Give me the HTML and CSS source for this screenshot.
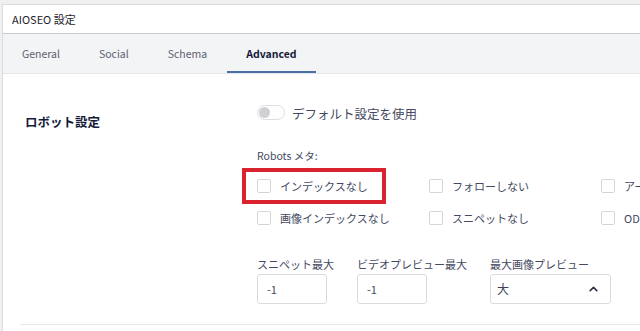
FILE: index.html
```html
<!DOCTYPE html>
<html lang="ja">
<head>
<meta charset="utf-8">
<title>AIOSEO 設定</title>
<link rel="stylesheet" href="styles.css">
</head>
<body>
<div class="panel">
  <div class="panel-header">AIOSEO 設定</div>
  <div class="tabs">
    <div class="tab">General</div>
    <div class="tab">Social</div>
    <div class="tab">Schema</div>
    <div class="tab active">Advanced</div>
  </div>
  <div class="content">
    <div class="setting-row">
      <div class="setting-label">ロボット設定</div>
      <div class="setting-body">
        <div class="toggle-row">
          <span class="toggle"><span class="knob"></span></span>
          <span class="toggle-text">デフォルト設定を使用</span>
        </div>
        <div class="meta-label">Robots メタ:</div>
        <div class="check-grid">
          <label class="check highlighted"><span class="box"></span><span class="check-text">インデックスなし</span><span class="highlight"></span></label>
          <label class="check"><span class="box"></span><span class="check-text">フォローしない</span></label>
          <label class="check"><span class="box"></span><span class="check-text">アーカイブなし</span></label>
          <label class="check"><span class="box"></span><span class="check-text">画像インデックスなし</span></label>
          <label class="check"><span class="box"></span><span class="check-text">スニペットなし</span></label>
          <label class="check"><span class="box"></span><span class="check-text">ODPなし</span></label>
        </div>
        <div class="fields">
          <div class="field">
            <div class="field-label">スニペット最大</div>
            <div class="input">-1</div>
          </div>
          <div class="field">
            <div class="field-label">ビデオプレビュー最大</div>
            <div class="input">-1</div>
          </div>
          <div class="field">
            <div class="field-label">最大画像プレビュー</div>
            <div class="select">
              <span class="select-value">大</span>
              <svg class="chev" width="9" height="6" viewBox="0 0 9 6"><polyline points="1.2,4.6 4.5,1.4 7.8,4.6" fill="none" stroke="#2c3345" stroke-width="1.6" stroke-linecap="round" stroke-linejoin="round"/></svg>
            </div>
          </div>
        </div>
      </div>
    </div>
  </div>
</div>
</body>
</html>
```
FILE: styles.css
```css
html, body {
  margin: 0;
  padding: 0;
  overflow: hidden;
}
body {
  background: #f0f0f1;
  font-family: "Noto Sans CJK JP", "Noto Sans", sans-serif;
  color: #434960;
  width: 640px;
  height: 331px;
}
.panel {
  margin: 4px 0 0 2px;
  width: 800px;
  height: 400px;
  background: #fff;
  border: 1px solid #dcdcde;
}
.panel-header {
  height: 28px;
  line-height: 28px;
  padding-left: 9px;
  font-size: 11px;
  color: #1d2327;
  border-bottom: 1px solid #c9cacd;
}
.tabs {
  display: flex;
  height: 39px;
  background: #f3f4f6;
  border-bottom: 1px solid #e4e6ea;
}
.tab {
  padding: 0 19.5px;
  line-height: 39px;
  font-size: 10.5px;
  color: #5b6072;
}
.tab:first-child {
  padding-left: 19px;
}
.tab.active {
  font-weight: 700;
  color: #141b38;
  box-shadow: inset 0 -2px 0 #4a6ea6;
}
.content {
  padding-left: 17px;
}
.setting-row {
  display: grid;
  grid-template-columns: 232px 1fr;
  padding: 30px 0 20px 5px;
  border-bottom: 1px solid #e6e7ea;
}
.setting-label {
  margin-top: 10px;
  font-size: 12.5px;
  line-height: 16px;
  font-weight: 700;
  color: #141b38;
}
.toggle-row {
  display: flex;
  align-items: center;
  gap: 7px;
  height: 16px;
}
.toggle {
  box-sizing: border-box;
  width: 28px;
  height: 15px;
  border: 1px solid #dcdde2;
  border-radius: 8px;
  background: #fff;
  padding: 1px;
  display: flex;
}
.knob {
  width: 11px;
  height: 11px;
  border-radius: 50%;
  background: #cfd0d5;
}
.toggle-text {
  font-size: 12.5px;
  line-height: 16px;
  margin-top: 4px;
  color: #434960;
}
.meta-label {
  margin-top: 29px;
  font-size: 10.5px;
  line-height: 14px;
  color: #434960;
}
.check-grid {
  margin-top: 16px;
  display: grid;
  grid-template-columns: repeat(3, 172px);
  row-gap: 18px;
}
.check {
  position: relative;
  display: flex;
  align-items: center;
  gap: 9px;
  height: 14px;
}
.box {
  box-sizing: border-box;
  width: 14px;
  height: 14px;
  border: 1px solid #d3d5db;
  border-radius: 2px;
  background: #fff;
  flex: none;
}
.check-text {
  font-size: 11px;
  line-height: 14px;
  white-space: nowrap;
  color: #434960;
}
.highlight {
  position: absolute;
  left: -15px;
  top: -11px;
  width: 144px;
  height: 36px;
  box-sizing: border-box;
  border: 4px solid #d9232e;
}
.fields {
  margin-top: 32px;
  display: flex;
  gap: 23px;
}
.field {
  display: flex;
  flex-direction: column;
  gap: 3px;
}
.field-label {
  font-size: 11px;
  line-height: 14px;
  white-space: nowrap;
  color: #434960;
}
.input, .select {
  box-sizing: border-box;
  height: 30px;
  border: 1px solid #d9dbe0;
  border-radius: 3px;
  background: #fff;
  font-size: 11px;
  line-height: 28px;
  color: #434960;
}
.input {
  width: 70px;
  padding-left: 9px;
}
.select {
  width: 121px;
  padding: 0 12px 0 6px;
  display: flex;
  align-items: center;
  justify-content: space-between;
}
.select-value {
  font-size: 12px;
  color: #3a3f52;
}
.chev {
  display: block;
}
```
